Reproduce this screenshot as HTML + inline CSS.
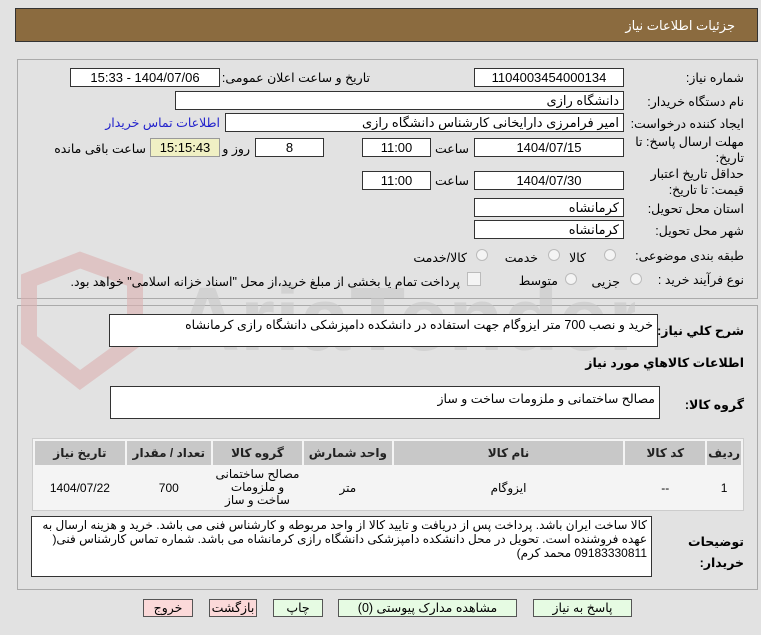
<!DOCTYPE html>
<html><head><meta charset="utf-8"><style>
body{margin:0;width:761px;height:635px;background:#e2e2e2;font-family:"Liberation Sans","DejaVu Sans",sans-serif;font-size:12px;color:#000;position:relative;overflow:hidden;direction:rtl}
.a{position:absolute}
.hdr{left:15px;top:8px;width:743px;height:34px;background:#8b6b3f;border:1px solid #333;box-sizing:border-box;color:#fff;font-size:13px}
.pan{border:1px solid #aaa;box-sizing:border-box}
.box{position:absolute;background:#fff;border:1px solid #333;box-sizing:border-box;height:19px;line-height:17px;text-align:center;font-size:13px}
.lb{position:absolute;white-space:nowrap;font-size:12.5px}
.ta{position:absolute;background:#fff;border:1px solid #333;box-sizing:border-box;text-align:right;padding:3px 4px;font-size:12.5px;line-height:19px}
.rad{position:absolute;width:12px;height:12px;border-radius:50%;border:1px solid #bbb;background:#f4f4f4;box-sizing:border-box}
table{position:absolute;left:32px;top:438px;width:712px;border-collapse:separate;border-spacing:2px;background:#f4f4f4;border:1px solid #ccc;direction:ltr}
th{background:#c8c8c8;height:22px;font-size:12px;color:#222;direction:rtl}
td{background:#f4f4f4;text-align:center;font-size:12px;height:38px;direction:rtl}
.btn{position:absolute;top:599px;height:18px;border:1px solid #555;box-sizing:border-box;text-align:center;line-height:16px;font-size:12.5px;background:#e6fbe3}
</style></head><body>
<div class="a hdr"><span class="a" style="right:22px;top:9px">جزئیات اطلاعات نیاز</span></div>
<div class="a pan" style="left:17px;top:59px;width:741px;height:240px"></div>
<div class="a pan" style="left:17px;top:305px;width:741px;height:285px"></div>
<svg class="a" style="left:15px;top:250px" width="620" height="140">
<path d="M14 30 L65 10 L120 30 L120 90 L65 130 L14 90 Z" fill="none" stroke="#dcb0b0" stroke-width="16" opacity="0.6"/>
<text x="160" y="100" font-size="90" font-family="Liberation Sans" fill="#c8c8c8" style="direction:ltr" opacity="0.6" font-weight="bold">AriaTender.net</text>
</svg>
<span class="lb" style="right:17px;top:70px">شماره نیاز:</span>
<div class="box" style="left:474px;top:68px;width:150px">1104003454000134</div>
<span class="lb" style="right:391px;top:70px">تاریخ و ساعت اعلان عمومی:</span>
<div class="box" style="left:70px;top:68px;width:150px">1404/07/06 - 15:33</div>
<span class="lb" style="right:17px;top:94px">نام دستگاه خریدار:</span>
<div class="box" style="left:175px;top:91px;width:449px;text-align:right;padding-right:4px">دانشگاه رازی</div>
<span class="lb" style="right:17px;top:116px">ایجاد کننده درخواست:</span>
<div class="box" style="left:225px;top:113px;width:399px;text-align:right;padding-right:4px">امیر فرامرزی دارایخانی کارشناس دانشگاه رازی</div>
<span class="lb" style="right:541px;top:115px;color:#2222cc">اطلاعات تماس خریدار</span>
<span class="lb" style="right:17px;top:134px;line-height:16px">مهلت ارسال پاسخ: تا<br>تاریخ:</span>
<div class="box" style="left:474px;top:138px;width:150px">1404/07/15</div>
<span class="lb" style="right:292px;top:141px">ساعت</span>
<div class="box" style="left:362px;top:138px;width:69px">11:00</div>
<div class="box" style="left:255px;top:138px;width:69px">8</div>
<span class="lb" style="right:511px;top:141px">روز و</span>
<div class="box" style="left:150px;top:138px;width:70px;background:#f0f0c4;border-color:#999">15:15:43</div>
<span class="lb" style="right:615px;top:141px">ساعت باقی مانده</span>
<span class="lb" style="right:17px;top:166px;line-height:16px">حداقل تاریخ اعتبار<br>قیمت: تا تاریخ:</span>
<div class="box" style="left:474px;top:171px;width:150px">1404/07/30</div>
<span class="lb" style="right:292px;top:173px">ساعت</span>
<div class="box" style="left:362px;top:171px;width:69px">11:00</div>
<span class="lb" style="right:17px;top:201px">استان محل تحویل:</span>
<div class="box" style="left:474px;top:198px;width:150px;text-align:right;padding-right:4px">کرمانشاه</div>
<span class="lb" style="right:17px;top:223px">شهر محل تحویل:</span>
<div class="box" style="left:474px;top:220px;width:150px;text-align:right;padding-right:4px">کرمانشاه</div>
<span class="lb" style="right:17px;top:248px">طبقه بندی موضوعی:</span>
<div class="rad" style="left:604px;top:249px"></div><span class="lb" style="right:175px;top:250px">کالا</span>
<div class="rad" style="left:548px;top:249px"></div><span class="lb" style="right:223px;top:250px">خدمت</span>
<div class="rad" style="left:476px;top:249px"></div><span class="lb" style="right:294px;top:250px">کالا/خدمت</span>
<span class="lb" style="right:17px;top:272px">نوع فرآیند خرید :</span>
<div class="rad" style="left:630px;top:273px"></div><span class="lb" style="right:141px;top:274px">جزیی</span>
<div class="rad" style="left:565px;top:273px"></div><span class="lb" style="right:203px;top:273px">متوسط</span>
<div class="a" style="left:467px;top:272px;width:12px;height:12px;border:1px solid #bbb;background:#f4f4f4"></div>
<span class="lb" style="right:301px;top:274px">پرداخت تمام یا بخشی از مبلغ خرید،از محل "اسناد خزانه اسلامی" خواهد بود.</span>
<span class="lb" style="right:17px;top:323px;font-weight:bold">شرح کلي نیاز:</span>
<div class="ta" style="left:109px;top:314px;width:549px;height:33px;padding-top:1px">خرید و نصب 700 متر ایزوگام جهت استفاده در دانشکده دامپزشکی دانشگاه رازی کرمانشاه</div>
<span class="lb" style="right:17px;top:355px;font-weight:bold">اطلاعات کالاهاي مورد نیاز</span>
<span class="lb" style="right:17px;top:397px;font-weight:bold">گروه کالا:</span>
<div class="ta" style="left:110px;top:386px;width:550px;height:33px">مصالح ساختمانی و ملزومات ساخت و ساز</div>
<table><tr><th style="width:89px">تاریخ نیاز</th><th style="width:84px">تعداد / مقدار</th><th style="width:89px">گروه کالا</th><th style="width:87px">واحد شمارش</th><th style="width:236px">نام کالا</th><th style="width:80px">کد کالا</th><th>ردیف</th></tr>
<tr><td>1404/07/22</td><td>700</td><td style="line-height:13px">مصالح ساختمانی و ملزومات ساخت و ساز</td><td>متر</td><td>ایزوگام</td><td>--</td><td>1</td></tr></table>
<span class="lb" style="right:17px;top:532px;font-weight:bold;line-height:21px">توضیحات<br>خریدار:</span>
<div class="ta" style="left:31px;top:516px;width:621px;height:61px;padding-top:1px;line-height:14px;font-size:12px">کالا ساخت ایران باشد. پرداخت پس از دریافت و تایید کالا از واحد مربوطه و کارشناس فنی می باشد. خرید و هزینه ارسال به عهده فروشنده است. تحویل در محل دانشکده دامپزشکی دانشگاه رازی کرمانشاه می باشد. شماره تماس کارشناس فنی( 09183330811 محمد کرم)</div>
<div class="btn" style="left:143px;width:50px;background:#fbd9d9">خروج</div>
<div class="btn" style="left:209px;width:48px;background:#fbd9d9">بازگشت</div>
<div class="btn" style="left:273px;width:50px">چاپ</div>
<div class="btn" style="left:338px;width:179px">مشاهده مدارک پیوستی (0)</div>
<div class="btn" style="left:533px;width:99px">پاسخ به نیاز</div>
</body></html>
